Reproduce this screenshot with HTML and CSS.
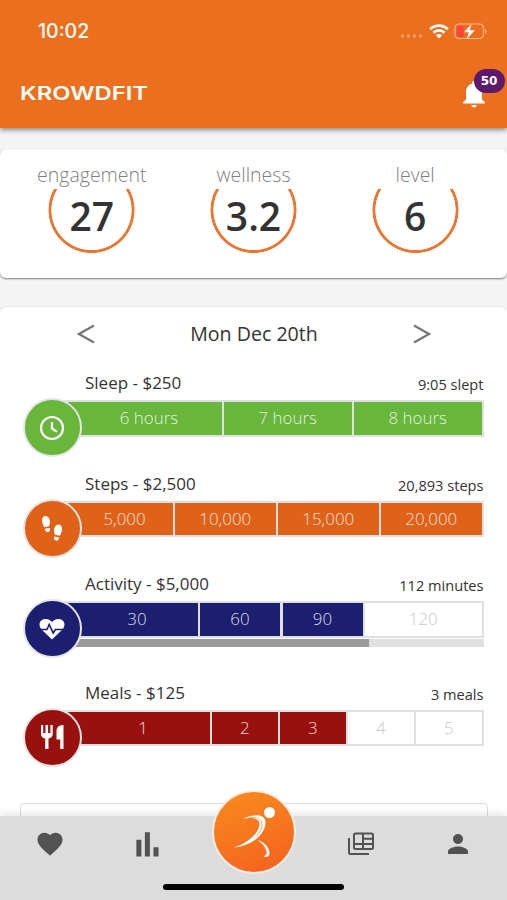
FILE: index.html
```html
<!DOCTYPE html>
<html lang="en">
<head>
    <meta charset="UTF-8">
    <meta name="viewport" content="width=device-width, initial-scale=1.0">
    <title>KrowdFit</title>
    <link rel="stylesheet" href="styles.css">
</head>
<body>

    <header class="header">
        <div class="status-bar">
            <span class="time">10:02</span>
            <div class="status-icons">
                <span class="signal"><i></i><i></i><i></i><i></i></span>
                <svg class="wifi" viewBox="0 0 20 15" fill="none" stroke="#fff" stroke-width="2.7">
                    <path d="M1.2 5.2C6 .4 14 .4 18.8 5.2"/>
                    <path d="M4.4 8.7c3.2-3 8-3 11.2 0"/>
                    <path d="M6.8 11.3c1.9-1.6 4.5-1.6 6.4 0L10 14.6z" fill="#fff" stroke="none"/>
                </svg>
                <svg class="battery" viewBox="0 0 33 17">
                    <rect x="1" y="1" width="28.5" height="14.5" rx="4" fill="none" stroke="#f9b98d" stroke-width="1.2"/>
                    <path d="M31 6v5c2-.6 2-4.4 0-5z" fill="#f9b98d"/>
                    <rect x="2.6" y="2.6" width="7" height="11.3" rx="2" fill="#ff453a"/>
                    <path d="M17.5 1L10 9.3h4.8L12.8 16l8-8.8h-5z" fill="#fff"/>
                </svg>
            </div>
        </div>
        <div class="title-bar">
            <svg class="logo" viewBox="0 0 150 30">
                <text x="0" y="22.3" textLength="128" lengthAdjust="spacingAndGlyphs">KROWDFIT</text>
            </svg>
            <div class="bell">
                <svg viewBox="0 0 22 27" fill="#fff">
                    <path d="M11 0c-1.2 0-2 .9-2 2v.8C5.2 3.7 3 7 3 11v7.5L0 21.3v1.2h22v-1.2l-3-2.8V11c0-4-2.2-7.3-6-8.2V2c0-1.1-.8-2-2-2z"/>
                    <path d="M8.5 24h5a2.5 2.5 0 0 1-5 0z"/>
                </svg>
                <span class="badge">50</span>
            </div>
        </div>
    </header>

    <section class="card stats">
        <div class="stat">
            <span class="stat-label">engagement</span>
            <div class="ring"><span>27</span></div>
        </div>
        <div class="stat">
            <span class="stat-label">wellness</span>
            <div class="ring"><span>3.2</span></div>
        </div>
        <div class="stat">
            <span class="stat-label">level</span>
            <div class="ring"><span>6</span></div>
        </div>
    </section>

    <section class="card goals">
        <div class="date-nav">
            <svg viewBox="0 0 18 20"><path d="M17 1.5L2 10l15 8.5"/></svg>
            <span>Mon Dec 20th</span>
            <svg viewBox="0 0 18 20"><path d="M1 1.5L16 10 1 18.5"/></svg>
        </div>

        <div class="goal sleep">
            <div class="goal-head"><span>Sleep - $250</span><small>9:05 slept</small></div>
            <div class="track">
                <div class="icon">
                    <svg viewBox="0 0 26 26" fill="none" stroke="#fff" stroke-width="2.2">
                        <circle cx="13" cy="13" r="11"/>
                        <path d="M13 7v6.5l5 3.3"/>
                    </svg>
                </div>
                <div class="bar">
                    <span class="done">6 hours</span><span class="done">7 hours</span><span class="done">8 hours</span>
                </div>
            </div>
        </div>

        <div class="goal steps">
            <div class="goal-head"><span>Steps - $2,500</span><small>20,893 steps</small></div>
            <div class="track">
                <div class="icon">
                    <svg viewBox="0 0 26 26" fill="#fff">
                        <path d="M6.5 1c2.700 0 4.500 3 4.500 6 0 1.900-.7 3-.9 4.200l-5 1C4.400 10 3 8.500 3 5.600 3 3 4.300 1 6.500 1z"/>
                        <path d="M5.800 13.800l5.200-.9c.6 2.300-.6 3.900-2.300 4.100-1.700.1-2.700-1.200-2.900-3.200z"/>
                        <path d="M19.500 9.600c2.200 0 3.500 2 3.500 4.600 0 2.900-1.400 4.400-2.100 6.600l-5-1c-.2-1.200-.9-2.300-.9-4.200 0-3 1.800-6 4.500-6z"/>
                        <path d="M20.200 22.400l-5.200-.9c-.6 2.300.6 3.900 2.300 4.100 1.700.1 2.700-1.200 2.900-3.200z"/>
                    </svg>
                </div>
                <div class="bar">
                    <span class="done">5,000</span><span class="done">10,000</span><span class="done">15,000</span><span class="done">20,000</span>
                </div>
            </div>
        </div>

        <div class="goal activity">
            <div class="goal-head"><span>Activity - $5,000</span><small>112 minutes</small></div>
            <div class="track">
                <div class="icon">
                    <svg viewBox="0 0 26 26">
                        <path d="M13 23.5L2.500 13.500C-2 7.500 2 3 6.500 3 9.500 3 12 4.500 13 6c1-1.500 3.500-3 6.500-3C24 3 28 7.500 23.500 13.500z" fill="#fff"/>
                        <path d="M0 13.500h8l2.200-5 4 8.500 2.300-3.500H26" fill="none" stroke="#1c1f70" stroke-width="1.600"/>
                    </svg>
                </div>
                <div class="bar">
                    <span class="done">30</span><span class="done">60</span><span class="done">90</span><span>120</span>
                </div>
                <div class="progress"><div style="width: 73.6%"></div></div>
            </div>
        </div>

        <div class="goal meals">
            <div class="goal-head"><span>Meals - $125</span><small>3 meals</small></div>
            <div class="track">
                <div class="icon">
                    <svg viewBox="0 0 26 26" fill="#fff">
                        <path d="M2 1h2.200v8H6.500V1h2.600v8h2.300V1h2.300v9c0 2.600-1.600 4-4.200 4.600V25H6.200V14.600C3.600 14 2 12.600 2 10z"/>
                        <path d="M24.500 1v24h-3.300v-9.500H17.500V7c0-4 3-6 7-6z"/>
                    </svg>
                </div>
                <div class="bar">
                    <span class="done">1</span><span class="done">2</span><span class="done">3</span><span>4</span><span>5</span>
                </div>
            </div>
        </div>

        <div class="panel"></div>
    </section>

    <nav class="tab-bar">
        <a class="tab"><svg viewBox="0 0 24 24"><path d="M12 21.350l-1.450-1.320C5.400 15.360 2 12.280 2 8.500 2 5.420 4.420 3 7.500 3c1.740 0 3.410.81 4.500 2.090C13.090 3.810 14.760 3 16.500 3 19.580 3 22 5.420 22 8.500c0 3.780-3.400 6.860-8.550 11.540z"/></svg></a>
        <a class="tab"><svg viewBox="0 0 24 24"><path d="M2.700 8.500h4V22h-4zM9.500 2.500h4V22h-4zM16.400 14.500h4V22h-4z"/></svg></a>
        <a class="tab home">
            <svg viewBox="0 0 84 84" fill="#fff">
                <circle cx="57.5" cy="22.500" r="5.500"/>
                <path d="M31 28.500c10-4.500 22.500-5.500 22.500 4C53.500 44 40 56 22 57.500 36 53 47 43 47.500 34c0-6-8-7-16.500-5.500z"/>
                <path d="M37 27.500c9-1 13.500 2 13 9-1 4-3 7-6 10" fill="none" stroke="#f58432" stroke-width=".7"/>
                <path d="M45.500 50c7 2 12.500 8 12 14-.5 3-3 3.500-6 2.500 5.500-2 2-11-6-16.500z"/>
                <path d="M49 53c4 4 6 8 5 12" fill="none" stroke="#f4742a" stroke-width=".8"/>
            </svg>
        </a>
        <a class="tab"><svg class="news" viewBox="0 0 28 24">
            <g fill="none" stroke="#525252" stroke-width="2">
                <rect x="7" y="1.500" width="19" height="15.500" rx="1.500"/>
                <path d="M2 6v14.500c0 1 .5 1.500 1.500 1.500H22M7 12h19M16 1.500V12M16 6.800h10M16 12v5"/>
            </g>
        </svg></a>
        <a class="tab"><svg viewBox="0 0 24 24"><path d="M12 12c2.210 0 4-1.790 4-4s-1.790-4-4-4-4 1.790-4 4 1.790 4 4 4zm0 2c-2.670 0-8 1.340-8 4v2h16v-2c0-2.660-5.330-4-8-4z"/></svg></a>
        <div class="home-indicator"></div>
    </nav>

</body>
</html>
```

FILE: styles.css
```css
* {
    box-sizing: border-box;
}

body {
    margin: 0;
    height: 900px;
    overflow: hidden;
    background-color: #f5f4f5;
    font-family: "Open Sans", "Noto Sans", sans-serif;
    color: #333;
}

svg {
    display: block;
}

/* header */
.header {
    height: 128px;
    background-color: #ec6f1f;
    box-shadow: 0 2px 5px rgba(0, 0, 0, 0.45);
    color: #fff;
}

.status-bar {
    display: flex;
    justify-content: space-between;
    align-items: center;
    height: 62px;
    padding: 0 20px 0 38px;
}

.time {
    font-family: Inter, sans-serif;
    font-size: 19.5px;
    font-weight: 500;
}

.status-icons {
    display: flex;
    align-items: center;
}

.signal {
    display: flex;
    gap: 2.5px;
    margin: 10px 7px 0 0;
}

.signal i {
    width: 3.5px;
    height: 3.5px;
    border-radius: 50%;
    background-color: #f29a62;
}

.wifi {
    width: 20px;
    height: 15px;
    margin-right: 5px;
}

.battery {
    width: 33px;
    height: 17px;
}

.title-bar {
    display: flex;
    justify-content: space-between;
    align-items: center;
    height: 62px;
    padding: 0 22px 0 20px;
}

.logo {
    width: 150px;
    height: 30px;
}

.logo text {
    font-family: Inter, sans-serif;
    font-size: 19px;
    font-weight: 600;
    fill: #fff;
}

.bell {
    position: relative;
    width: 22px;
    height: 27px;
    margin-top: 2px;
}

.badge {
    position: absolute;
    left: 10.5px;
    top: -12px;
    width: 31px;
    height: 24px;
    border-radius: 12px;
    background-color: #5d1a6d;
    font: 700 12px/24px "DejaVu Sans", sans-serif;
    text-align: center;
}

/* cards */
.card {
    background-color: #fff;
    border-radius: 6px;
    box-shadow: 0 1px 2px rgba(0, 0, 0, 0.5);
}

.stats {
    display: grid;
    grid-template-columns: repeat(3, 1fr);
    height: 129px;
    margin-top: 21px;
    padding: 12px 11px 0;
}

.stat {
    display: flex;
    flex-direction: column;
    align-items: center;
}

.stat-label {
    height: 28px;
    font-size: 19.5px;
    font-weight: 300;
    line-height: 28px;
    color: #808080;
}

/* the top of the ring is cut off under the label */
.ring {
    display: flex;
    justify-content: center;
    align-items: flex-end;
    width: 87px;
    height: 64px;
    overflow: hidden;
    background: radial-gradient(circle at 50% 21px, transparent 39.8px, #ec7530 40.5px, #ec7530 42.6px, transparent 43.3px);
}

.ring span {
    font-size: 39px;
    font-weight: 600;
    line-height: 74px;
}

.goals {
    height: 593px;
    margin-top: 29px;
    padding-top: 12px;
    box-shadow: 0 0 2px rgba(0, 0, 0, 0.15);
}

.date-nav {
    display: flex;
    justify-content: space-between;
    align-items: center;
    height: 28px;
    margin: 0 76px 25px 77px;
    font-size: 19.6px;
}

.date-nav svg {
    width: 18px;
    height: 20px;
    margin-top: 2px;
    fill: none;
    stroke: #777;
    stroke-width: 2.2;
}

/* goal rows */
.goal {
    height: 100.5px;
    margin: 0 23.5px 0 22.5px;
}

.goal-head {
    display: flex;
    justify-content: space-between;
    align-items: baseline;
    height: 26px;
    padding-left: 62.5px;
    font-size: 17px;
    line-height: 21px;
}

.goal-head small {
    font-size: 14.6px;
    position: relative;
    top: 1px;
}

.track {
    display: grid;
    grid-template-rows: 39.5px 8px;
}

.icon {
    grid-area: 1 / 1 / 3 / 2;
    display: flex;
    justify-content: center;
    align-items: center;
    z-index: 1;
    width: 59px;
    height: 59px;
    border: 2px solid #e6e4e4;
    border-radius: 50%;
}

.icon svg {
    width: 26px;
    height: 26px;
}

.bar {
    grid-area: 1 / 1;
    display: grid;
    gap: 2.5px;
    height: 36.5px;
    margin: 2px 0 0 29px;
    padding: 2px;
    background-color: #e0e0e0;
}

.bar span {
    background-color: #fff;
    font-size: 16.9px;
    font-weight: 300;
    line-height: 32px;
    text-align: center;
    color: #c8c8c8;
}

.bar span:first-child {
    padding-left: 23px;
}

.bar .done {
    color: rgba(255, 255, 255, 0.85);
}

.progress {
    grid-area: 2 / 1;
    margin-left: 29px;
    background-color: #e0e0e0;
}

.progress div {
    height: 8px;
    background-color: #999;
}

.sleep .icon,
.sleep .done {
    background-color: #69b63d;
}

.sleep .bar {
    grid-template-columns: 168px 1fr 1fr;
}

.steps .icon,
.steps .done {
    background-color: #df6218;
}

.steps .bar {
    grid-template-columns: 119px 1fr 1fr 1fr;
}

.activity .icon,
.activity .done {
    background-color: #1c1f70;
}

.activity .bar {
    grid-template-columns: 144px 80px 80px 1fr;
}

.activity {
    height: 108.5px;
}

.meals .icon,
.meals .done {
    background-color: #98110f;
}

.meals .bar {
    grid-template-columns: 156px 1fr 1fr 1fr 1fr;
}

.panel {
    height: 60px;
    margin: 21px 19px 0 20px;
    border: 1px solid #ddd;
    border-radius: 4px;
}

/* bottom tabs */
.tab-bar {
    position: fixed;
    left: 0;
    right: 0;
    bottom: 0;
    z-index: 2;
    display: grid;
    grid-template-columns: 99px 97px 1fr 97px 98px;
    grid-template-rows: 55px 29px;
    background-color: #dcdcdc;
    box-shadow: 0 -2px 8px rgba(0, 0, 0, 0.12);
}

.tab {
    display: flex;
    justify-content: center;
    align-items: center;
}

.tab svg {
    width: 30px;
    height: 30px;
    fill: #525252;
}

.tab .news {
    width: 28px;
    height: 24px;
}

.home {
    justify-self: center;
    width: 84px;
    height: 84px;
    margin: -26px 1px 0 0;
    border: 2px solid #f8eee6;
    border-radius: 50%;
    background: linear-gradient(160deg, #f98c1d, #f4601f);
}

.tab.home svg {
    width: 84px;
    height: 84px;
    flex: none;
    fill: #fff;
}

.home-indicator {
    grid-column: 1 / -1;
    justify-self: center;
    width: 181px;
    height: 6px;
    margin-top: 13px;
    border-radius: 3px;
    background-color: #000;
}
```
